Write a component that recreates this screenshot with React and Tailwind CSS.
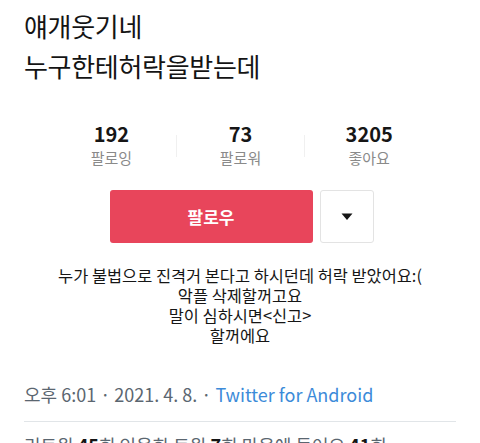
import React from 'react';

const stats = [
  { value: '192', label: '팔로잉' },
  { value: '73', label: '팔로워' },
  { value: '3205', label: '좋아요' },
];

const App = () => {
  return (
    <div
      className="w-[480px] h-[443px] overflow-hidden bg-white text-[#141414]"
      style={{ fontFamily: '"Noto Sans CJK KR", "Noto Sans", sans-serif' }}
    >
      {/* Tweet text */}
      <div className="px-6 pt-[6px] text-[26px] leading-[40px] tracking-[-0.3px]">
        <p>얘개웃기네</p>
        <p>누구한테허락을받는데</p>
      </div>

      {/* Profile card */}
      <div className="mt-[35px] flex justify-center">
        <div className="flex w-[386px]">
          {stats.map((s, i) => (
            <div key={s.label} className="flex flex-1 items-center">
              {i > 0 && <div className="h-[22px] w-px bg-[#f0f0f0]" />}
              <div className="flex flex-1 flex-col items-center">
                <span className="text-[20px] font-bold leading-[25px] text-[#161616]">{s.value}</span>
                <span className="text-[15px] leading-[24px] text-[#8a8a8a]">{s.label}</span>
              </div>
            </div>
          ))}
        </div>
      </div>

      <div className="mt-[20px] flex justify-center gap-[7px] pl-[3px]">
        <button className="flex h-[53px] w-[203px] items-center justify-center rounded-[3px] bg-[#e8455b] text-[17px] font-bold text-white">
          팔로우
        </button>
        <button className="flex h-[53px] w-[54px] items-center justify-center rounded-[3px] border border-[#e3e3e3] bg-white">
          <svg width="12" height="8" viewBox="0 0 12 8">
            <path d="M0.5 0.5 L11.5 0.5 L6 7 Z" fill="#161616" />
          </svg>
        </button>
      </div>

      <div className="mt-[22px] text-center text-[16.4px] leading-[20px] text-[#161616]">
        <p>누가 불법으로 진격거 본다고 하시던데 허락 받았어요:(</p>
        <p>악플 삭제할꺼고요</p>
        <p>말이 심하시면&lt;신고&gt;</p>
        <p>할꺼에요</p>
      </div>

      {/* Meta */}
      <div className="mt-[37px] px-6 text-[18px] leading-[24px] text-[#5b6670]">
        오후 6:01 · 2021. 4. 8. · <span className="text-[#3c8bd9]">Twitter for Android</span>
      </div>
      <div className="mx-6 mt-[15px] h-px bg-[#e1e5e8]" />
      <div className="px-6 pt-[11px] text-[18px] leading-[24px] text-[#5b6670]">
        리트윗 <span className="font-bold text-[#141414]">45</span>회 인용한 트윗{' '}
        <span className="font-bold text-[#141414]">7</span>회 마음에 들어요{' '}
        <span className="font-bold text-[#141414]">41</span>회
      </div>
    </div>
  );
};

export default App;
